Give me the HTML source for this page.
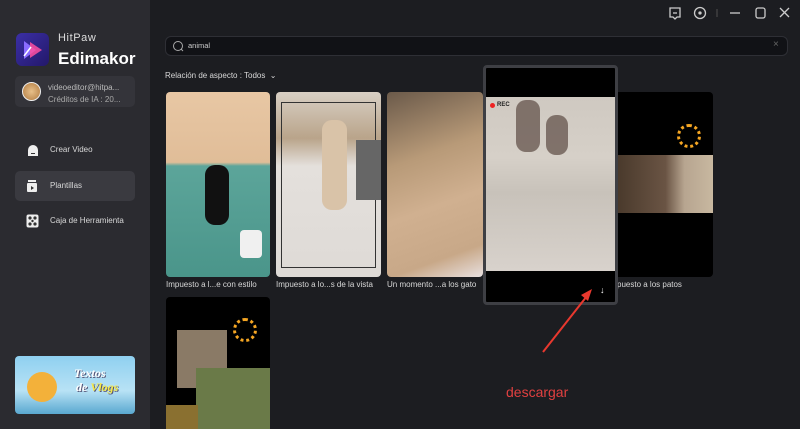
<!DOCTYPE html>
<html style="width:800px;height:429px;overflow:hidden;background:#1c1d21"><head><meta charset="utf-8"><style>
*{margin:0;padding:0;box-sizing:border-box}
body{width:800px;height:429px;overflow:hidden;background:#1c1d21;font-family:"Liberation Sans",sans-serif;position:relative;color:#ddd}
.a{position:absolute}
.side{left:0;top:0;width:150px;height:429px;background:#2b2b30}
.t{font-size:8px;color:#d8d8d8;white-space:nowrap}
.card{border-radius:4px;overflow:hidden}
</style></head><body>
<div class="a side"></div>
<div class="a" style="left:16px;top:33px;width:33px;height:33px;border-radius:6px;background:linear-gradient(135deg,#3b2fa5,#23186a)"></div>
<svg class="a" style="left:20px;top:38px" width="26" height="24"><polygon points="4,3 16,12 4,21" fill="#8a6cff"/><polygon points="10,4 22,12 10,20" fill="#ff4fa0" opacity=".85"/><line x1="4" y1="18" x2="11" y2="9" stroke="#fff" stroke-width="1.5"/></svg>
<div class="a" style="left:58px;top:32px;font-size:11px;color:#ddd;letter-spacing:.6px">HitPaw</div>
<div class="a" style="left:58px;top:49px;font-size:17px;font-weight:bold;color:#fff">Edimakor</div>
<div class="a" style="left:15px;top:76px;width:120px;height:31px;background:#34343a;border-radius:5px"></div>
<div class="a" style="left:22px;top:82px;width:19px;height:19px;border-radius:50%;background:radial-gradient(#e8c08a,#b07a40);border:1px solid #eee"></div>
<div class="a t" style="left:48px;top:83px;color:#bbb">videoeditor@hitpa...</div>
<div class="a t" style="left:48px;top:95px;color:#aaa">Créditos de IA : 20...</div>
<svg class="a" style="left:26px;top:143px" width="14" height="14"><path d="M2,13 V7 A5,5 0 0 1 12,7 V13 Z" fill="#eee"/><rect x="5" y="10" width="4" height="1" fill="#333"/></svg>
<div class="a t" style="left:50px;top:145px">Crear Video</div>
<div class="a" style="left:15px;top:171px;width:120px;height:30px;background:#3a3a40;border-radius:5px"></div>
<svg class="a" style="left:26px;top:179px" width="12" height="14"><rect x="1" y="4" width="10" height="9" rx="1" fill="#eee"/><rect x="2" y="1" width="8" height="2" fill="#eee"/><polygon points="5,7 8,9 5,11" fill="#333"/></svg>
<div class="a t" style="left:50px;top:181px">Plantillas</div>
<svg class="a" style="left:26px;top:214px" width="13" height="14"><rect x="0.5" y="0.5" width="12" height="13" rx="2" fill="#eee"/><circle cx="4" cy="4" r="1.6" fill="#333"/><circle cx="9" cy="4" r="1.6" fill="#333"/><circle cx="4" cy="10" r="1.6" fill="#333"/><circle cx="9" cy="10" r="1.6" fill="#333"/><circle cx="6.5" cy="7" r="1.2" fill="#333"/></svg>
<div class="a t" style="left:50px;top:216px">Caja de Herramienta</div>
<div class="a card" style="left:15px;top:356px;width:120px;height:58px;background:linear-gradient(180deg,#8fd0f0 0%,#b8e2f5 60%,#5aa8d0 100%)"></div>
<div class="a" style="left:27px;top:372px;width:30px;height:30px;border-radius:50%;background:#f3b13a"></div>
<div class="a" style="left:74px;top:366px;font:italic bold 12px 'Liberation Serif',serif;color:#fff;text-shadow:1px 1px 0 #557">Textos</div>
<div class="a" style="left:76px;top:380px;font:italic bold 12px 'Liberation Serif',serif;color:#fff;text-shadow:1px 1px 0 #557">de <span style="color:#f5e84a">Vlogs</span></div>
<svg class="a" style="left:668px;top:6px" width="130" height="16" fill="none" stroke="#ccc" stroke-width="1.3"><path d="M2,2 h10 v9 h-3 l-2,2 l-2,-2 h-3 z"/><line x1="5" y1="7" x2="9" y2="7"/><circle cx="32" cy="7" r="5.5"/><circle cx="32" cy="7" r="1" fill="#ccc"/><line x1="49" y1="3" x2="49" y2="11" stroke="#444"/><line x1="62" y1="7" x2="72" y2="7"/><rect x="88" y="2" width="9" height="10" rx="2"/><path d="M112,2 l9,9 M121,2 l-9,9"/></svg>
<div class="a" style="left:165px;top:36px;width:623px;height:20px;background:#111216;border:1px solid #2e2f35;border-radius:6px"></div>
<svg class="a" style="left:172px;top:40px" width="12" height="12" fill="none" stroke="#aaa" stroke-width="1"><circle cx="6" cy="6" r="4.5"/><line x1="9" y1="9" x2="11" y2="11"/></svg>
<div class="a" style="left:188px;top:41px;font-size:7.5px;color:#ccc">animal</div>
<div class="a" style="left:773px;top:39px;font-size:10px;color:#666">×</div>
<div class="a t" style="left:165px;top:71px">Relación de aspecto : Todos &nbsp;⌄</div>
<div class="a card" style="left:166px;top:92px;width:104px;height:185px;background:linear-gradient(180deg,#e8c7a4 0%,#e0bd98 38%,#5ca59a 40%,#4a958a 100%)"></div>
<div class="a" style="left:205px;top:165px;width:24px;height:60px;background:#111;border-radius:10px"></div>
<div class="a" style="left:240px;top:230px;width:22px;height:28px;background:#f0f0f0;border-radius:4px"></div>
<div class="a card" style="left:276px;top:92px;width:105px;height:185px;background:linear-gradient(180deg,#d8cfc4 0%,#b9a48a 25%,#e4e0dc 40%,#dedad6 100%)"></div>
<div class="a" style="left:281px;top:102px;width:95px;height:166px;border:1px solid #333"></div>
<div class="a" style="left:322px;top:120px;width:25px;height:90px;background:#d9c3a8;border-radius:10px"></div>
<div class="a" style="left:356px;top:140px;width:25px;height:60px;background:#666"></div>
<div class="a card" style="left:387px;top:92px;width:96px;height:185px;background:linear-gradient(160deg,#6b5a4a 0%,#b89a78 35%,#d0b090 60%,#c8a888 85%,#e8e0e0 100%)"></div>
<div class="a card" style="left:610px;top:92px;width:103px;height:185px;background:#000"></div>
<div class="a" style="left:618px;top:155px;width:95px;height:58px;background:linear-gradient(90deg,#4a3a2c 0%,#6a5444 50%,#b7a590 70%,#c8b8a0 100%)"></div>
<div class="a" style="left:677px;top:124px;width:24px;height:24px;border-radius:50%;border:3px dotted #f5a623"></div>
<div class="a t" style="left:166px;top:280px">Impuesto a l...e con estilo</div>
<div class="a t" style="left:276px;top:280px">Impuesto a lo...s de la vista</div>
<div class="a t" style="left:387px;top:280px">Un momento ...a los gato</div>
<div class="a t" style="left:617px;top:280px">puesto a los patos</div>
<div class="a" style="left:483px;top:65px;width:135px;height:240px;background:#000;border:3px solid #3e3f44;border-radius:4px"></div>
<div class="a" style="left:486px;top:97px;width:129px;height:174px;background:linear-gradient(180deg,#cfc9c1 0%,#d6d0c8 35%,#c8c2ba 55%,#d8d2cc 100%)"></div>
<div class="a" style="left:516px;top:100px;width:24px;height:52px;background:#6a5a52;border-radius:10px;opacity:.8"></div>
<div class="a" style="left:546px;top:115px;width:22px;height:40px;background:#6a5a52;border-radius:10px;opacity:.8"></div>
<div class="a" style="left:490px;top:103px;width:5px;height:5px;border-radius:50%;background:#e22"></div>
<div class="a" style="left:497px;top:102px;font-size:6px;font-weight:bold;color:#222">REC</div>
<div class="a" style="left:600px;top:285px;font-size:9px;color:#fff">↓</div>
<div class="a card" style="left:166px;top:297px;width:104px;height:140px;background:#000"></div>
<div class="a" style="left:177px;top:330px;width:50px;height:58px;background:#8a7a66"></div>
<div class="a" style="left:196px;top:368px;width:74px;height:61px;background:#6a7a48"></div>
<div class="a" style="left:166px;top:405px;width:32px;height:24px;background:#8a7030"></div>
<div class="a" style="left:233px;top:318px;width:24px;height:24px;border-radius:50%;border:3px dotted #f5a623"></div>
<svg class="a" style="left:535px;top:280px" width="80" height="80"><line x1="8" y1="72" x2="52" y2="16" stroke="#e8382e" stroke-width="2"/><polygon points="57,9 46,15 53,21" fill="#e8382e"/></svg>
<div class="a" style="left:506px;top:384px;font-size:14px;color:#e04040">descargar</div>
</body></html>
